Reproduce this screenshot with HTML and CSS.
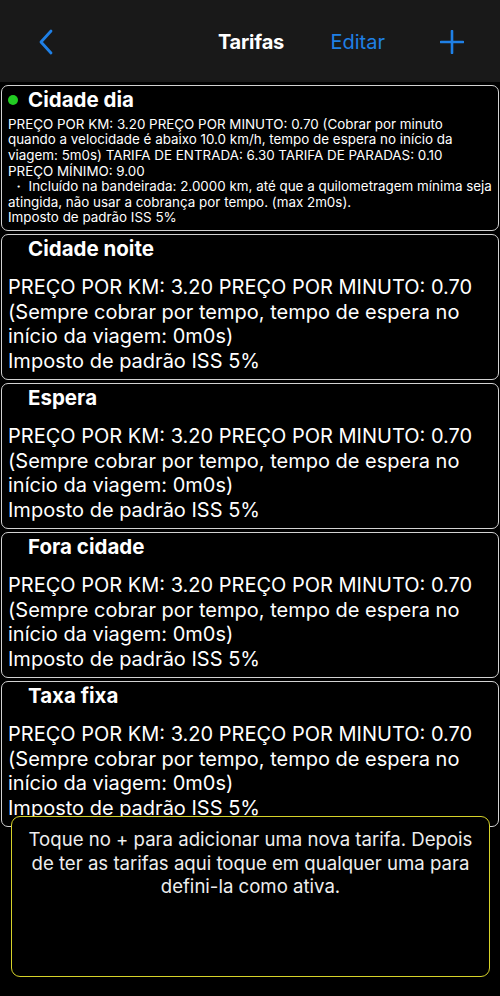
FILE: index.html
```html
<!DOCTYPE html>
<html lang="pt">

<head>
  <meta charset="UTF-8" />
  <meta name="viewport" content="width=device-width, initial-scale=1.0" />
  <title>Tarifas</title>
  <link rel="stylesheet" href="styles.css">
</head>

<body>
  <div class="navbar">
    <div class="nav-left">
      <svg class="back" width="16" height="26" viewBox="0 0 16 26">
        <path d="M13 2 L3 13 L13 24" fill="none" stroke="#1f80e6" stroke-width="2.8" stroke-linecap="round" stroke-linejoin="round" />
      </svg>
    </div>
    <div class="nav-title">Tarifas</div>
    <div class="nav-right">
      <span class="edit">Editar</span>
      <svg class="add" width="24" height="24" viewBox="0 0 24 24">
        <path d="M12 1 V23 M1 12 H23" fill="none" stroke="#1f80e6" stroke-width="2.6" stroke-linecap="round" />
      </svg>
    </div>
  </div>

  <ul class="tariff-list">
    <li class="tariff">
      <div class="tariff-head"><span class="dot active"></span><h3>Cidade dia</h3></div>
      <div class="tariff-body small">
        <p>PREÇO POR KM: 3.20 PREÇO POR MINUTO: 0.70 (Cobrar por minuto quando a velocidade é abaixo 10.0 km/h, tempo de espera no início da viagem: 5m0s) TARIFA DE ENTRADA: 6.30 TARIFA DE PARADAS: 0.10<br>PREÇO MÍNIMO: 9.00</p>
        <p>&nbsp;・ Incluído na bandeirada: 2.0000 km, até que a quilometragem mínima seja atingida, não usar a cobrança por tempo. (max 2m0s).</p>
        <p>Imposto de padrão ISS 5%</p>
      </div>
    </li>
    <li class="tariff">
      <div class="tariff-head"><span class="dot"></span><h3>Cidade noite</h3></div>
      <div class="tariff-body">
        <p>PREÇO POR KM: 3.20 PREÇO POR MINUTO: 0.70 (Sempre cobrar por tempo, tempo de espera no início da viagem: 0m0s)</p>
        <p>Imposto de padrão ISS 5%</p>
      </div>
    </li>
    <li class="tariff">
      <div class="tariff-head"><span class="dot"></span><h3>Espera</h3></div>
      <div class="tariff-body">
        <p>PREÇO POR KM: 3.20 PREÇO POR MINUTO: 0.70 (Sempre cobrar por tempo, tempo de espera no início da viagem: 0m0s)</p>
        <p>Imposto de padrão ISS 5%</p>
      </div>
    </li>
    <li class="tariff">
      <div class="tariff-head"><span class="dot"></span><h3>Fora cidade</h3></div>
      <div class="tariff-body">
        <p>PREÇO POR KM: 3.20 PREÇO POR MINUTO: 0.70 (Sempre cobrar por tempo, tempo de espera no início da viagem: 0m0s)</p>
        <p>Imposto de padrão ISS 5%</p>
      </div>
    </li>
    <li class="tariff">
      <div class="tariff-head"><span class="dot"></span><h3>Taxa fixa</h3></div>
      <div class="tariff-body">
        <p>PREÇO POR KM: 3.20 PREÇO POR MINUTO: 0.70 (Sempre cobrar por tempo, tempo de espera no início da viagem: 0m0s)</p>
        <p>Imposto de padrão ISS 5%</p>
      </div>
    </li>
  </ul>

  <!-- dica por cima da lista -->
  <div class="hint">
    <p>Toque no + para adicionar uma nova tarifa. Depois de ter as tarifas aqui toque em qualquer uma para defini-la como ativa.</p>
  </div>
</body>

</html>
```

FILE: styles.css
```css
* {
  box-sizing: border-box;
}

body {
  margin: 0;
  height: 996px;
  overflow: hidden;
  background: #000;
  color: #fff;
  font-family: Inter, "Liberation Sans", sans-serif;
}

.navbar {
  height: 82px;
  background: #191919;
  display: grid;
  grid-template-columns: 1fr auto 1fr;
  align-items: center;
  padding: 2px 36px 0 38px;
}

.nav-left {
  display: flex;
  align-items: center;
}

.back {
  display: block;
}

.nav-title {
  font-size: 20px;
  font-weight: 700;
  letter-spacing: -0.2px;
}

.nav-right {
  display: flex;
  align-items: center;
  justify-content: flex-end;
  gap: 55px;
}

.edit {
  color: #1f80e6;
  font-size: 20px;
}

.add {
  display: block;
}

.tariff-list {
  margin: 0;
  padding: 3px 1px 0 1px;
  list-style: none;
  display: flex;
  flex-direction: column;
  gap: 3px;
}

.tariff {
  height: 146px;
  border: 1.5px solid #d2d2d2;
  border-radius: 7px;
  display: flex;
  flex-direction: column;
  overflow: hidden;
}

.tariff-head {
  display: flex;
  align-items: center;
  gap: 10px;
  padding: 1px 6px 0 6px;
  height: 26px;
}

.tariff-head h3 {
  margin: 0;
  font-size: 20.5px;
  font-weight: 700;
}

.dot {
  width: 10px;
  height: 10px;
  border-radius: 50%;
}

.dot.active {
  background: #22cc22;
}

.tariff-body {
  flex: 1;
  display: flex;
  flex-direction: column;
  justify-content: flex-end;
  padding: 0 6px 6px 6px;
  font-size: 20px;
  line-height: 24.5px;
}

.tariff-body p {
  margin: 0;
}

.tariff-body.small {
  font-size: 13.4px;
  line-height: 15.6px;
  padding-bottom: 4px;
}

.hint {
  position: absolute;
  left: 11px;
  top: 816px;
  width: 479px;
  height: 161px;
  background: #000;
  border: 1.5px solid #d6d22a;
  border-radius: 9px;
  padding: 11px 12px 0 12px;
}

.hint p {
  margin: 0;
  text-align: center;
  font-size: 18.6px;
  line-height: 23.5px;
  color: #eee;
}
```
